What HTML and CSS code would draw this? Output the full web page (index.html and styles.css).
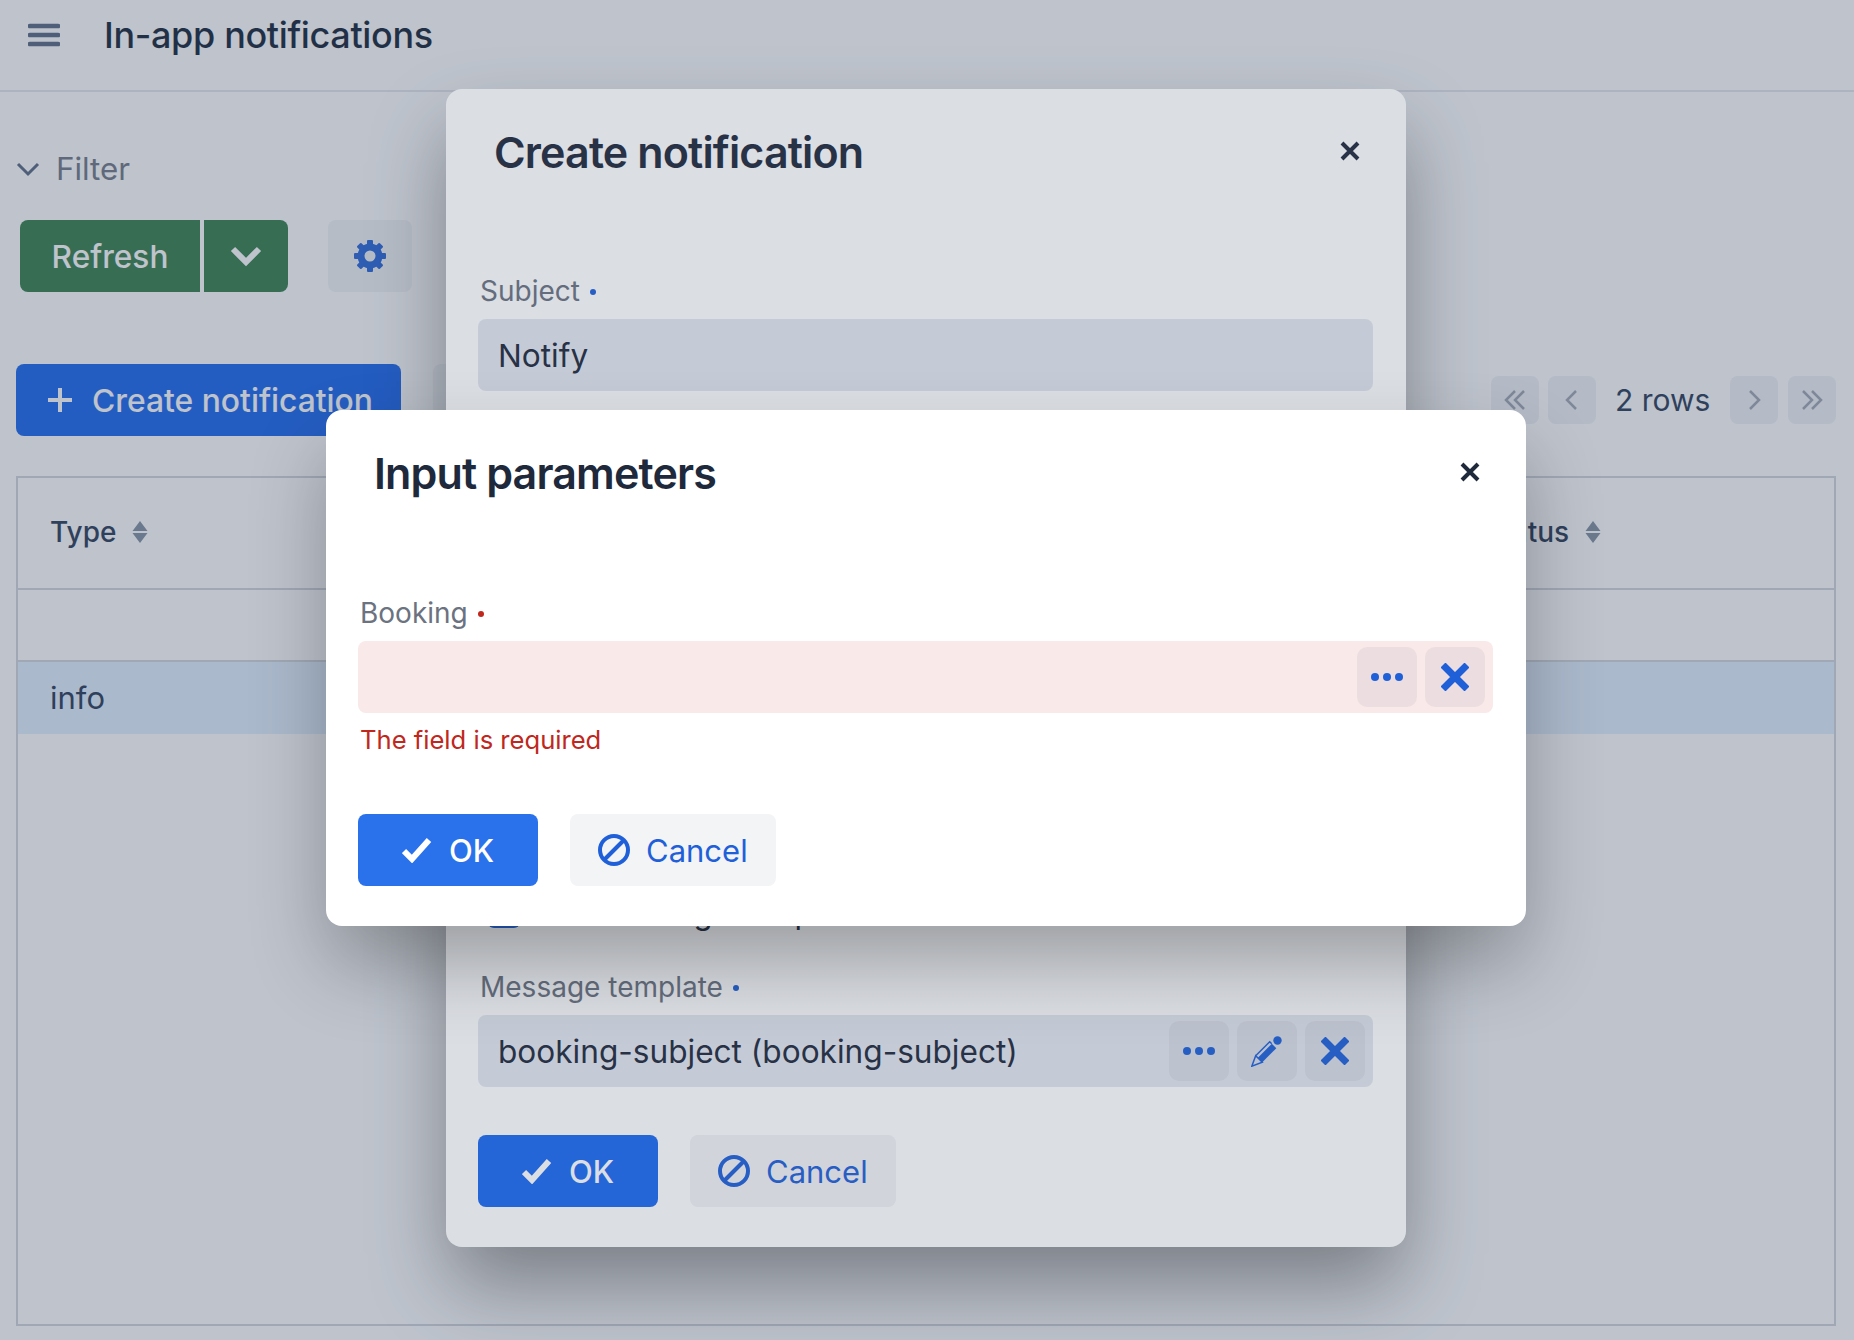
FILE: index.html
```html
<!DOCTYPE html>
<html lang="en">
<head>
<meta charset="utf-8">
<title>In-app notifications</title>
<link rel="stylesheet" href="styles.css">
</head>
<body>
<div class="page">
  <header class="topbar">
    <svg class="menu-icon" width="32" height="24" viewBox="0 0 32 24"><path d="M2 3h28M2 12h28M2 21h28"/></svg>
    <h1 class="page-title">In-app notifications</h1>
  </header>
  <main class="content">
    <div class="filter-toggle">
      <svg class="filter-chevron" width="24" height="16" viewBox="0 0 24 16"><path d="M2 3l10 10L22 3"/></svg>
      <span>Filter</span>
    </div>
    <div class="refresh-row">
      <button class="btn btn-green btn-refresh">Refresh</button>
      <button class="btn btn-green btn-caret"><svg class="icon-caret" width="32" height="22" viewBox="0 0 32 22"><path d="M3 4l13 13L29 4"/></svg></button>
      <button class="btn btn-soft btn-gear">
        <svg width="32" height="32" viewBox="0 0 32 32" class="icon-gear">
          <circle class="gear-ring" cx="16" cy="16" r="9"/>
          <g class="gear-teeth">
            <rect x="13" y="0" width="6" height="6" rx="1"/>
            <rect x="13" y="0" width="6" height="6" rx="1" transform="rotate(45 16 16)"/>
            <rect x="13" y="0" width="6" height="6" rx="1" transform="rotate(90 16 16)"/>
            <rect x="13" y="0" width="6" height="6" rx="1" transform="rotate(135 16 16)"/>
            <rect x="13" y="0" width="6" height="6" rx="1" transform="rotate(180 16 16)"/>
            <rect x="13" y="0" width="6" height="6" rx="1" transform="rotate(225 16 16)"/>
            <rect x="13" y="0" width="6" height="6" rx="1" transform="rotate(270 16 16)"/>
            <rect x="13" y="0" width="6" height="6" rx="1" transform="rotate(315 16 16)"/>
          </g>
        </svg>
      </button>
    </div>
    <div class="action-row">
      <button class="btn btn-blue btn-create">
        <svg class="icon-plus" width="24" height="24" viewBox="0 0 24 24"><path d="M12 0v24M0 12h24"/></svg>
        Create notification
      </button>
      <button class="btn btn-soft btn-behind"></button>
      <nav class="pager">
        <button class="page-btn"><svg width="24" height="24" viewBox="0 0 24 24"><path d="M12 3l-9 9 9 9M21 3l-9 9 9 9"/></svg></button>
        <button class="page-btn"><svg width="24" height="24" viewBox="0 0 24 24"><path d="M16 3l-9 9 9 9"/></svg></button>
        <span class="page-count">2 rows</span>
        <button class="page-btn"><svg width="24" height="24" viewBox="0 0 24 24"><path d="M8 3l9 9-9 9"/></svg></button>
        <button class="page-btn"><svg width="24" height="24" viewBox="0 0 24 24"><path d="M3 3l9 9-9 9M12 3l9 9-9 9"/></svg></button>
      </nav>
    </div>
    <section class="table">
      <div class="row row-head">
        <div class="th">Type <svg class="sort" width="16" height="22" viewBox="0 0 16 22"><path d="M8 0l7.500 10H.5zM8 22L.5 12h15z"/></svg></div>
        <div class="th">Status <svg class="sort" width="16" height="22" viewBox="0 0 16 22"><path d="M8 0l7.500 10H.5zM8 22L.5 12h15z"/></svg></div>
      </div>
      <div class="row row-filter"></div>
      <div class="row row-selected"><div class="td">info</div></div>
    </section>
  </main>

  <div class="overlay overlay-back">
    <div class="modal modal-back">
      <div class="modal-head">
        <h2 class="modal-title">Create notification</h2>
        <svg class="close-icon" width="20" height="20" viewBox="0 0 20 20"><path d="M2 2l16 16M18 2L2 18"/></svg>
      </div>
      <div class="form form-back">
        <label class="label">Subject <i class="dot"></i></label>
        <div class="input"><span class="value">Notify</span></div>
        <div class="check-row"><span class="checkbox"></span><span class="value">Use message template</span></div>
        <label class="label label-spaced">Message template <i class="dot"></i></label>
        <div class="input">
          <span class="value">booking-subject (booking-subject)</span>
          <span class="input-actions">
            <button class="mini-btn"><svg width="32" height="8" viewBox="0 0 32 8" class="icon-fill"><circle cx="4" cy="4" r="4"/><circle cx="16" cy="4" r="4"/><circle cx="28" cy="4" r="4"/></svg></button>
            <button class="mini-btn">
              <svg width="32" height="32" viewBox="0 0 32 32" class="icon-pencil">
                <path class="pencil-body" d="M20.800 8.800l4.500 4.500-14 14-4.500-4.500z"/>
                <circle class="pencil-fill" cx="26.500" cy="5.500" r="4.200"/>
                <path class="pencil-line" d="M4.700 20.700L18.700 6.700l2 2M4.700 20.700l6.600 6.600-10.500 3.900z"/>
              </svg>
            </button>
            <button class="mini-btn"><svg width="28" height="28" viewBox="0 0 28 28" class="icon-x"><path d="M2 2l24 24M26 2L2 26"/></svg></button>
          </span>
        </div>
        <div class="footer">
          <button class="btn btn-blue btn-ok"><svg class="icon-check" width="30" height="26" viewBox="0 0 30 26"><path d="M2 14l8 8L27 3"/></svg>OK</button>
          <button class="btn btn-soft btn-cancel"><svg class="icon-ban" width="32" height="32" viewBox="0 0 32 32"><circle cx="16" cy="16" r="14"/><path d="M6 26L26 6"/></svg>Cancel</button>
        </div>
      </div>
    </div>
  </div>

  <div class="overlay">
    <div class="modal modal-front">
      <div class="modal-head">
        <h2 class="modal-title">Input parameters</h2>
        <svg class="close-icon" width="20" height="20" viewBox="0 0 20 20"><path d="M2 2l16 16M18 2L2 18"/></svg>
      </div>
      <div class="form">
        <label class="label">Booking <i class="dot dot-error"></i></label>
        <div class="input input-error">
          <span class="input-actions">
            <button class="mini-btn"><svg width="32" height="8" viewBox="0 0 32 8" class="icon-fill"><circle cx="4" cy="4" r="4"/><circle cx="16" cy="4" r="4"/><circle cx="28" cy="4" r="4"/></svg></button>
            <button class="mini-btn"><svg width="28" height="28" viewBox="0 0 28 28" class="icon-x"><path d="M2 2l24 24M26 2L2 26"/></svg></button>
          </span>
        </div>
        <div class="error-text">The field is required</div>
        <div class="footer footer-front">
          <button class="btn btn-blue btn-ok"><svg class="icon-check" width="30" height="26" viewBox="0 0 30 26"><path d="M2 14l8 8L27 3"/></svg>OK</button>
          <button class="btn btn-soft btn-cancel"><svg class="icon-ban" width="32" height="32" viewBox="0 0 32 32"><circle cx="16" cy="16" r="14"/><path d="M6 26L26 6"/></svg>Cancel</button>
        </div>
      </div>
    </div>
  </div>
</div>
</body>
</html>
```
FILE: styles.css
```css
* { box-sizing: border-box; }
html, body { margin: 0; padding: 0; }
body { font-family: Inter, "Noto Sans", sans-serif; color: #1e293b; background: #fff; }
button { font-family: inherit; border: 0; cursor: pointer; }
svg { display: block; flex: none; }

.page { position: relative; width: 100%; height: 1340px; overflow: hidden; }

.topbar { height: 92px; display: flex; align-items: center; padding: 0 0 21px 28px; border-bottom: 2px solid #e5e7eb; }
.menu-icon path { fill: none; stroke: #53617d; stroke-width: 4.7; stroke-linecap: round; }
.page-title { margin: 0 0 0 44px; font-size: 36px; font-weight: 500; letter-spacing: -.36px; color: #0c1a30; line-height: 44px; }

.content { padding: 0 18px 0 16px; }
.filter-toggle { display: flex; align-items: center; height: 40px; margin-top: 57px; gap: 16px; font-size: 31.3px; color: #6b7280; }
.filter-chevron path { fill: none; stroke: #53617d; stroke-width: 3; }

.refresh-row { display: flex; margin: 31px 0 0 4px; height: 72px; }
.btn { display: flex; align-items: center; height: 72px; border-radius: 8px; font-size: 31px; font-weight: 500; padding: 0; }
.btn-green { background: #2b7942; color: #fff; }
.btn-refresh { width: 180px; justify-content: center; border-radius: 8px 0 0 8px; font-size: 31.6px; }
.btn-caret { width: 84px; margin-left: 4px; justify-content: center; border-radius: 0 8px 8px 0; }
.icon-caret path { fill: none; stroke: #fff; stroke-width: 6; }
.btn-soft { background: #f3f4f6; color: #1f60d9; font-weight: 400; }
.btn-gear { width: 84px; margin-left: 40px; justify-content: center; }
.gear-ring { fill: none; stroke: #1f60d9; stroke-width: 7; }
.gear-teeth rect { fill: #1f60d9; }

.action-row { display: flex; align-items: center; margin-top: 72px; height: 72px; }
.btn-blue { background: #1060ee; color: #fff; }
.btn-create { width: 385px; padding-left: 32px; gap: 20px; font-size: 31.8px; }
.icon-plus path { fill: none; stroke: #fff; stroke-width: 4; }
.btn-behind { width: 80px; margin-left: 32px; }
.pager { display: flex; align-items: center; margin-left: auto; }
.page-btn { width: 48px; height: 48px; border-radius: 8px; background: #f0f2f5; display: flex; align-items: center; justify-content: center; padding: 0; margin-left: 9px; }
.page-btn:last-child { margin-left: 10px; }
.page-btn svg path { fill: none; stroke: #9ca3af; stroke-width: 2.5; }
.page-count { width: 95px; font-size: 30px; white-space: nowrap; color: #1e3350; margin: 0 11px 0 19px; }

.table { margin-top: 40px; height: 850px; border: 2px solid #d1d5db; }
.row { display: grid; grid-template-columns: 1fr 382px; border-bottom: 2px solid #d1d5db; }
.row-head { height: 112px; align-items: center; padding-bottom: 2px; }
.row-filter { height: 72px; }
.row-selected { height: 72px; background: #e2efff; border-bottom: 0; align-items: center; padding-bottom: 2px; }
.th { display: flex; align-items: center; gap: 16px; padding-left: 32px; font-size: 28px; font-weight: 500; color: #1e3350; }
.td { padding-left: 32px; font-size: 31px; color: #1e3350; }
.sort path { fill: #7f8b9e; }

.overlay { position: absolute; inset: 0; background: rgba(75, 90, 115, .2); display: flex; align-items: center; justify-content: center; padding: 0 2px 4px 0; }
.modal { background: #fff; border-radius: 16px; }
.modal-back { width: 960px; height: 1158px; box-shadow: 0 40px 80px -5px rgba(0, 0, 0, .4); }
.modal-front { width: 1200px; height: 516px; box-shadow: 0 40px 80px -5px rgba(0, 0, 0, .3); }
.modal-head { height: 124px; display: flex; align-items: center; justify-content: space-between; padding: 0 46px 0 48px; }
.modal-title { margin: 2px 0 0; font-size: 43px; font-weight: 600; letter-spacing: -.86px; color: #1e293b; }
.close-icon path { fill: none; stroke: #1e293b; stroke-width: 4; }

.form { padding: 57px 33px 0 32px; }
.form-back { padding-top: 56px; }
.label { display: flex; align-items: center; gap: 10px; height: 40px; padding-top: 3px; margin: 0 0 10px 2px; font-size: 28px; color: #6b7280; }
.dot { width: 6px; height: 6px; border-radius: 50%; background: #1f60d9; margin-top: 3px; }
.dot-error { background: #c0271d; }
.input { display: flex; align-items: center; height: 72px; border-radius: 8px; background: #f3f4f6; padding-left: 20px; font-size: 31.6px; color: #1e293b; }
.modal-back .input { background: #e4e8ef; }
.input-error { background: #f9e9e9; }
.input-actions { display: flex; gap: 8px; margin-left: auto; padding-right: 8px; }
.mini-btn { width: 60px; height: 60px; border-radius: 10px; background: rgba(107, 114, 128, .09); display: flex; align-items: center; justify-content: center; padding: 0; }
.icon-fill circle { fill: #1f60d9; }
.icon-x path { fill: none; stroke: #1f60d9; stroke-width: 7; }
.pencil-body, .pencil-fill { fill: #1f60d9; }
.pencil-line { fill: none; stroke: #1f60d9; stroke-width: 1.5; }
.error-text { margin: 7px 0 0 2px; height: 40px; line-height: 40px; font-size: 25.6px; color: #c0271d; }
.check-row { display: flex; align-items: center; gap: 12px; margin: 505px 0 0 10px; height: 32px; font-size: 31px; }
.checkbox { width: 32px; height: 32px; border-radius: 6px; background: #1f60d9; }
.label-spaced { margin-top: 37px; }
.footer { display: flex; margin-top: 48px; gap: 32px; }
.footer-front { margin-top: 54px; }
.btn-ok { width: 180px; padding-left: 44px; gap: 17px; background: #2a71ec; }
.modal-back .btn-ok { background: #1b68f1; }
.btn-cancel { width: 206px; padding-left: 28px; gap: 16px; }
.icon-check path { fill: none; stroke: #fff; stroke-width: 6; }
.icon-ban circle, .icon-ban path { fill: none; stroke: #1f60d9; stroke-width: 4; }
```
